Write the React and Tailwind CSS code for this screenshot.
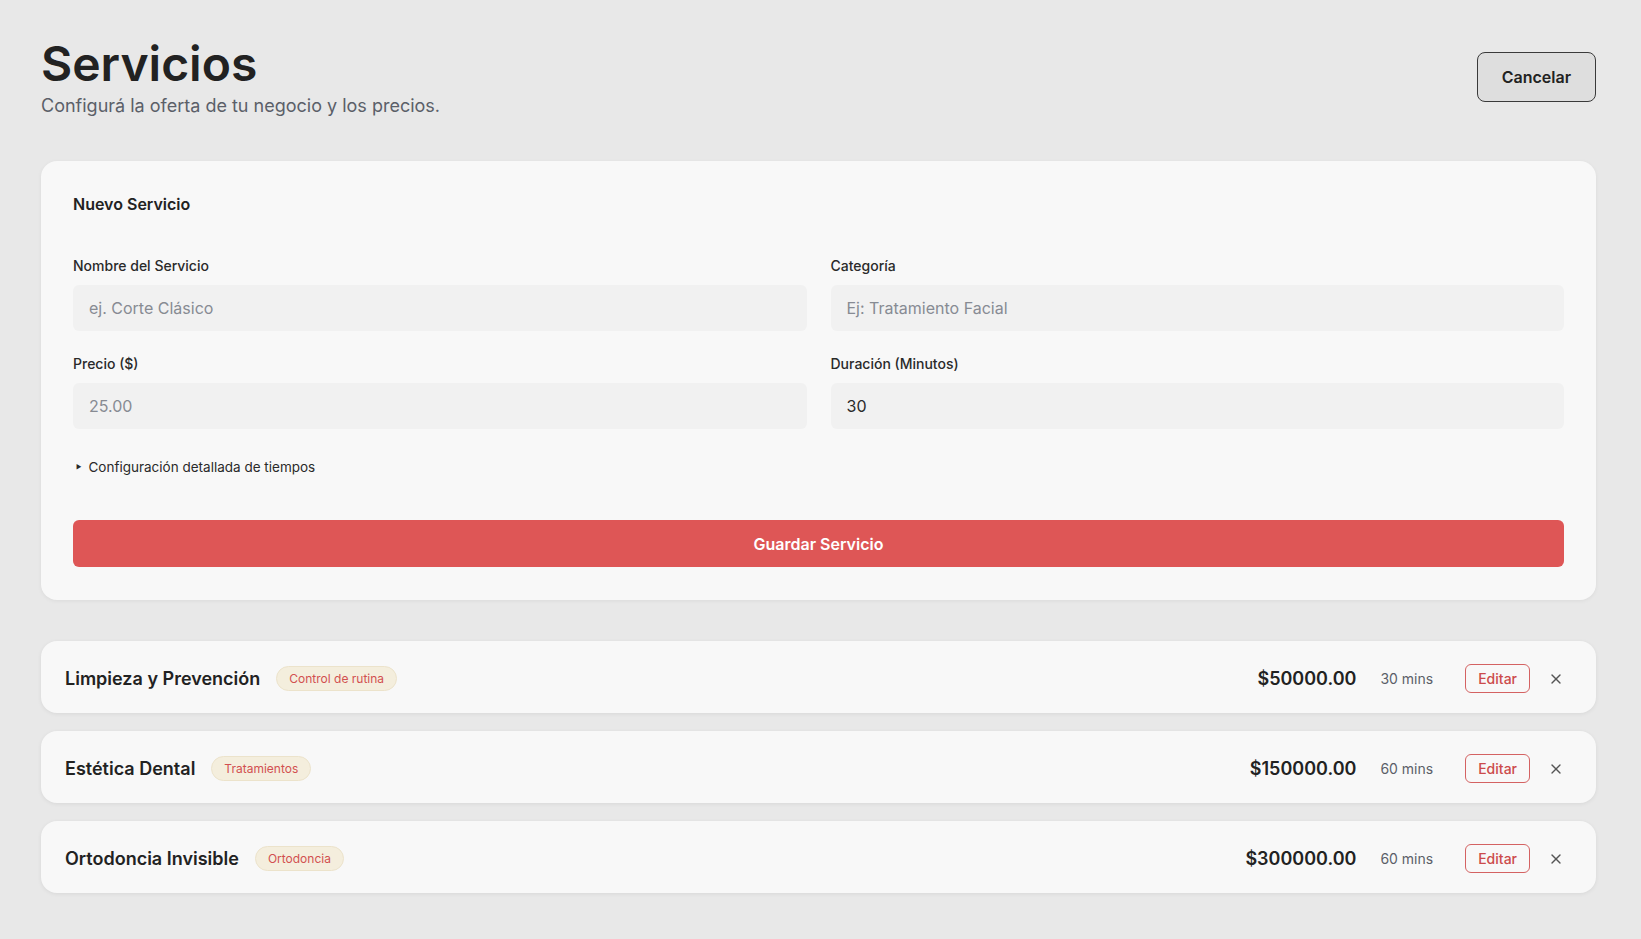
import React from 'react';
import { X } from 'lucide-react';

const services = [
  { name: 'Limpieza y Prevención', category: 'Control de rutina', price: '$50000.00', mins: '30 mins' },
  { name: 'Estética Dental', category: 'Tratamientos', price: '$150000.00', mins: '60 mins' },
  { name: 'Ortodoncia Invisible', category: 'Ortodoncia', price: '$300000.00', mins: '60 mins' },
];

const Field = ({ label, placeholder, value }) => (
  <div className="flex flex-col">
    <label className="text-sm font-medium text-[#2a2a2a] mb-[9px] leading-5">{label}</label>
    <input
      className="h-[46px] w-full rounded-md bg-[#f1f1f1] px-4 text-base text-[#2a2a2a] placeholder:text-[#878b93] outline-none"
      placeholder={placeholder}
      defaultValue={value}
    />
  </div>
);

const App = () => {
  return (
    <div className="min-h-screen bg-[#e8e8e8] pl-[41px] pr-[45px] pt-[36px] pb-10 font-['Inter',sans-serif]">
      {/* Header */}
      <div className="flex items-start justify-between">
        <div>
          <h1 className="text-[48px] font-semibold leading-[56px] text-[#222]">Servicios</h1>
          <p className="mt-[2px] text-lg text-[#5b5f68] leading-6">Configurá la oferta de tu negocio y los precios.</p>
        </div>
        <button className="mt-[16px] h-[50px] px-6 rounded-lg border border-[#3a3a3a] bg-[#dedede] text-base font-semibold text-[#222]">
          Cancelar
        </button>
      </div>

      {/* Form card */}
      <div className="mt-[43px] rounded-2xl bg-[#f8f8f8] px-8 pt-[31px] pb-[33px] shadow-[0_1px_4px_rgba(0,0,0,0.06)]">
        <h2 className="text-base font-semibold leading-6 text-[#222] mb-[40px]">Nuevo Servicio</h2>
        <div className="grid grid-cols-2 gap-x-6 gap-y-[23px]">
          <Field label="Nombre del Servicio" placeholder="ej. Corte Clásico" />
          <Field label="Categoría" placeholder="Ej: Tratamiento Facial" />
          <Field label="Precio ($)" placeholder="25.00" />
          <Field label="Duración (Minutos)" value="30" />
        </div>
        <div className="mt-[28px] flex items-center gap-[7px] text-[13.5px] leading-5 text-[#2a2a2a]">
          <span className="text-[6px] pl-[3px]">▶</span>
          <span>Configuración detallada de tiempos</span>
        </div>
        <button className="mt-[43px] h-[47px] w-full rounded-md bg-[#de5656] text-base font-semibold text-white">
          Guardar Servicio
        </button>
      </div>

      {/* Services list */}
      <div className="mt-[41px] flex flex-col gap-[18px]">
        {services.map((s) => (
          <div
            key={s.name}
            className="flex h-[72px] items-center justify-between rounded-2xl bg-[#f8f8f8] pl-6 pr-[28px] pt-[3px] shadow-[0_1px_4px_rgba(0,0,0,0.07)]"
          >
            <div className="flex items-center gap-4">
              <span className="text-lg font-semibold text-[#222]">{s.name}</span>
              <span className="h-[25px] flex items-center rounded-full border border-[#ece3cb] bg-[#f4eedd] px-3 text-xs text-[#d25050]">
                {s.category}
              </span>
            </div>
            <div className="flex items-center">
              <span className="text-lg font-semibold text-[#222]">{s.price}</span>
              <span className="ml-6 text-sm text-[#5b5f68]">{s.mins}</span>
              <button className="ml-8 h-[29px] px-3 rounded-md border border-[#d46262] text-sm font-medium text-[#cc4b4b]">
                Editar
              </button>
              <button className="ml-[14px] p-1 text-[#555]">
                <X size={16} strokeWidth={2} />
              </button>
            </div>
          </div>
        ))}
      </div>
    </div>
  );
};

export default App;
